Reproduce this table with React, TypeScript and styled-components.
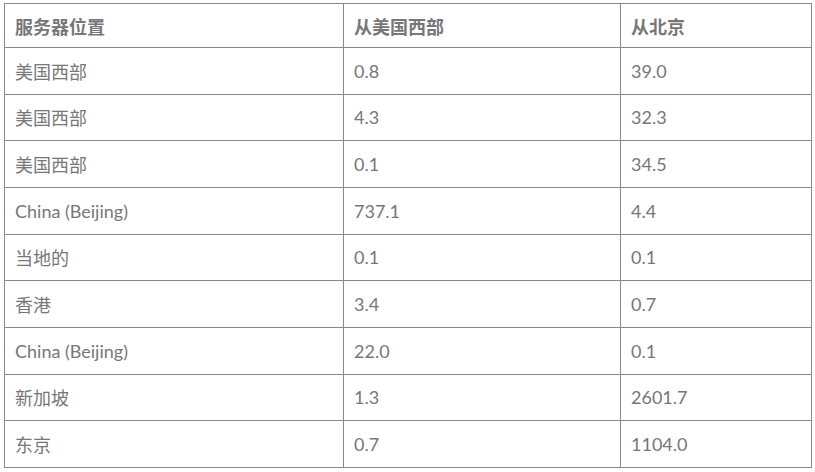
import styled, { createGlobalStyle } from "styled-components";

type Row = {
  place: string;
  fromUsWest: string;
  fromBeijing: string;
};

const rows: Row[] = [
  { place: "美国西部", fromUsWest: "0.8", fromBeijing: "39.0" },
  { place: "美国西部", fromUsWest: "4.3", fromBeijing: "32.3" },
  { place: "美国西部", fromUsWest: "0.1", fromBeijing: "34.5" },
  { place: "China (Beijing)", fromUsWest: "737.1", fromBeijing: "4.4" },
  { place: "当地的", fromUsWest: "0.1", fromBeijing: "0.1" },
  { place: "香港", fromUsWest: "3.4", fromBeijing: "0.7" },
  { place: "China (Beijing)", fromUsWest: "22.0", fromBeijing: "0.1" },
  { place: "新加坡", fromUsWest: "1.3", fromBeijing: "2601.7" },
  { place: "东京", fromUsWest: "0.7", fromBeijing: "1104.0" }
];

const GlobalStyle = createGlobalStyle`
  html, body {
    margin: 0;
    background: #fff;
  }
`;

function App() {
  return (
    <>
      <GlobalStyle />
      <Page>
        <LatencyTable>
          <colgroup>
            <Col $width={339} />
            <Col $width={277} />
            <col />
          </colgroup>
          <thead>
            <HeadRow>
              <HeadCell>服务器位置</HeadCell>
              <HeadCell>从美国西部</HeadCell>
              <HeadCell>从北京</HeadCell>
            </HeadRow>
          </thead>
          <tbody>
            {rows.map((row, i) => (
              <BodyRow key={i}>
                <Cell>{row.place}</Cell>
                <Cell>{row.fromUsWest}</Cell>
                <Cell>{row.fromBeijing}</Cell>
              </BodyRow>
            ))}
          </tbody>
        </LatencyTable>
      </Page>
    </>
  );
}

export default App;

const Page = styled.div`
  padding: 3px 0 0 4px;
`;

const LatencyTable = styled.table`
  width: 808px;
  table-layout: fixed;
  border-collapse: collapse;
  border: 1px solid #888;
  font-family: Lato, "Noto Sans CJK SC", sans-serif;
  font-size: 18px;
  color: #777;
`;

const Col = styled.col<{ $width: number }>`
  width: ${({ $width }) => $width}px;
`;

const HeadRow = styled.tr`
  height: 44px;
`;

const BodyRow = styled.tr`
  height: 46.67px;
`;

const HeadCell = styled.th`
  border: 1px solid #888;
  padding: 0 10px;
  text-align: left;
  font-weight: 700;
  vertical-align: middle;
`;

const Cell = styled.td`
  border: 1px solid #888;
  padding: 0 10px;
  vertical-align: middle;
`;
